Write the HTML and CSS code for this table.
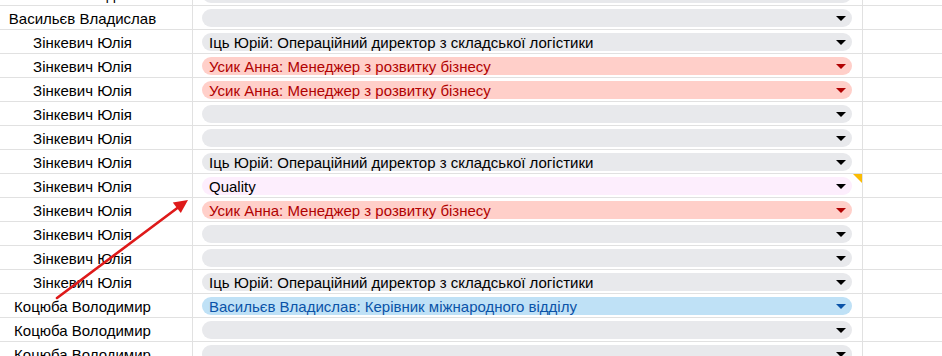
FILE: index.html
```html
<!DOCTYPE html>
<html lang="uk">
<head>
<meta charset="utf-8">
<title>Sheet</title>
<link rel="stylesheet" href="styles.css">
</head>
<body>
<div class="page">
  <div class="sheet">
    <div class="row">
      <div class="cell name">Васильєв Владислав</div>
      <div class="cell pick"><div class="chip grey"><span class="label"></span><svg class="caret" viewBox="0 0 10 5"><path d="M0 0h10L5 5z"/></svg></div></div>
      <div class="cell rest"></div>
    </div>
    <div class="row">
      <div class="cell name">Васильєв Владислав</div>
      <div class="cell pick"><div class="chip grey"><span class="label"></span><svg class="caret" viewBox="0 0 10 5"><path d="M0 0h10L5 5z"/></svg></div></div>
      <div class="cell rest"></div>
    </div>
    <div class="row">
      <div class="cell name">Зінкевич Юлія</div>
      <div class="cell pick"><div class="chip grey"><span class="label">Іць Юрій: Операційний директор з складської логістики</span><svg class="caret" viewBox="0 0 10 5"><path d="M0 0h10L5 5z"/></svg></div></div>
      <div class="cell rest"></div>
    </div>
    <div class="row">
      <div class="cell name">Зінкевич Юлія</div>
      <div class="cell pick"><div class="chip red"><span class="label">Усик Анна: Менеджер з розвитку бізнесу</span><svg class="caret" viewBox="0 0 10 5"><path d="M0 0h10L5 5z"/></svg></div></div>
      <div class="cell rest"></div>
    </div>
    <div class="row">
      <div class="cell name">Зінкевич Юлія</div>
      <div class="cell pick"><div class="chip red"><span class="label">Усик Анна: Менеджер з розвитку бізнесу</span><svg class="caret" viewBox="0 0 10 5"><path d="M0 0h10L5 5z"/></svg></div></div>
      <div class="cell rest"></div>
    </div>
    <div class="row">
      <div class="cell name">Зінкевич Юлія</div>
      <div class="cell pick"><div class="chip grey"><span class="label"></span><svg class="caret" viewBox="0 0 10 5"><path d="M0 0h10L5 5z"/></svg></div></div>
      <div class="cell rest"></div>
    </div>
    <div class="row">
      <div class="cell name">Зінкевич Юлія</div>
      <div class="cell pick"><div class="chip grey"><span class="label"></span><svg class="caret" viewBox="0 0 10 5"><path d="M0 0h10L5 5z"/></svg></div></div>
      <div class="cell rest"></div>
    </div>
    <div class="row">
      <div class="cell name">Зінкевич Юлія</div>
      <div class="cell pick"><div class="chip grey"><span class="label">Іць Юрій: Операційний директор з складської логістики</span><svg class="caret" viewBox="0 0 10 5"><path d="M0 0h10L5 5z"/></svg></div></div>
      <div class="cell rest"></div>
    </div>
    <div class="row">
      <div class="cell name">Зінкевич Юлія</div>
      <div class="cell pick"><div class="chip pink"><span class="label">Quality</span><svg class="caret" viewBox="0 0 10 5"><path d="M0 0h10L5 5z"/></svg></div><span class="note-mark"></span></div>
      <div class="cell rest"></div>
    </div>
    <div class="row">
      <div class="cell name">Зінкевич Юлія</div>
      <div class="cell pick"><div class="chip red"><span class="label">Усик Анна: Менеджер з розвитку бізнесу</span><svg class="caret" viewBox="0 0 10 5"><path d="M0 0h10L5 5z"/></svg></div></div>
      <div class="cell rest"></div>
    </div>
    <div class="row">
      <div class="cell name">Зінкевич Юлія</div>
      <div class="cell pick"><div class="chip grey"><span class="label"></span><svg class="caret" viewBox="0 0 10 5"><path d="M0 0h10L5 5z"/></svg></div></div>
      <div class="cell rest"></div>
    </div>
    <div class="row">
      <div class="cell name">Зінкевич Юлія</div>
      <div class="cell pick"><div class="chip grey"><span class="label"></span><svg class="caret" viewBox="0 0 10 5"><path d="M0 0h10L5 5z"/></svg></div></div>
      <div class="cell rest"></div>
    </div>
    <div class="row">
      <div class="cell name">Зінкевич Юлія</div>
      <div class="cell pick"><div class="chip grey"><span class="label">Іць Юрій: Операційний директор з складської логістики</span><svg class="caret" viewBox="0 0 10 5"><path d="M0 0h10L5 5z"/></svg></div></div>
      <div class="cell rest"></div>
    </div>
    <div class="row">
      <div class="cell name">Коцюба Володимир</div>
      <div class="cell pick"><div class="chip blue"><span class="label">Васильєв Владислав: Керівник міжнародного відділу</span><svg class="caret" viewBox="0 0 10 5"><path d="M0 0h10L5 5z"/></svg></div></div>
      <div class="cell rest"></div>
    </div>
    <div class="row">
      <div class="cell name">Коцюба Володимир</div>
      <div class="cell pick"><div class="chip grey"><span class="label"></span><svg class="caret" viewBox="0 0 10 5"><path d="M0 0h10L5 5z"/></svg></div></div>
      <div class="cell rest"></div>
    </div>
    <div class="row">
      <div class="cell name">Коцюба Володимир</div>
      <div class="cell pick"><div class="chip grey"><span class="label"></span><svg class="caret" viewBox="0 0 10 5"><path d="M0 0h10L5 5z"/></svg></div></div>
      <div class="cell rest"></div>
    </div>
  </div>
  <svg class="annotation" width="942" height="356" viewBox="0 0 942 356">
    <line x1="57" y1="298" x2="178" y2="207.5" stroke="#de1a1a" stroke-width="2.6" stroke-linecap="round"/>
    <polygon points="188,200 180.8,213 172.8,202.4" fill="#de1a1a"/>
  </svg>
</div>
</body>
</html>
```

FILE: styles.css
```css
html, body {
  margin: 0;
  padding: 0;
  background: #ffffff;
}

body {
  font-family: "Liberation Sans", Arial, sans-serif;
  font-size: 15px;
  color: #000000;
  overflow: hidden;
}

.page {
  position: relative;
  width: 942px;
  height: 356px;
  overflow: hidden;
}

.sheet {
  margin-top: -18px;
}

.row {
  display: grid;
  grid-template-columns: 193px 670px 1fr;
  height: 24px;
  box-sizing: border-box;
  border-bottom: 1px solid #e1e1e1;
}

.cell {
  box-sizing: border-box;
  border-right: 1px solid #e1e1e1;
  height: 23px;
}

.name {
  display: flex;
  align-items: flex-end;
  justify-content: center;
  padding: 0 27px 2px 0;
  line-height: 17px;
  white-space: nowrap;
}

.pick {
  position: relative;
  padding: 3px 10px 2px 9px;
}

.rest {
  border-right: none;
}

.chip {
  display: flex;
  align-items: center;
  height: 18px;
  border-radius: 9px;
  padding: 0 6px 0 7px;
  line-height: 18px;
  white-space: nowrap;
}

.chip .label {
  flex: 1;
  padding-top: 1px;
}

.caret {
  width: 10px;
  height: 5px;
  fill: currentColor;
  margin-top: 1px;
}

.grey {
  background: #e8e9ec;
  color: #000000;
}

.red {
  background: #ffcfc9;
  color: #b10202;
}

.blue {
  background: #bfe1f6;
  color: #0a53a8;
}

.pink {
  background: #fdeefd;
  color: #000000;
}

.pink .caret {
  fill: #000000;
}

.note-mark {
  position: absolute;
  top: 0;
  right: 0;
  width: 0;
  height: 0;
  border-top: 9px solid #fbbc04;
  border-left: 9px solid transparent;
}

.annotation {
  position: absolute;
  top: 0;
  left: 0;
  pointer-events: none;
}
```
